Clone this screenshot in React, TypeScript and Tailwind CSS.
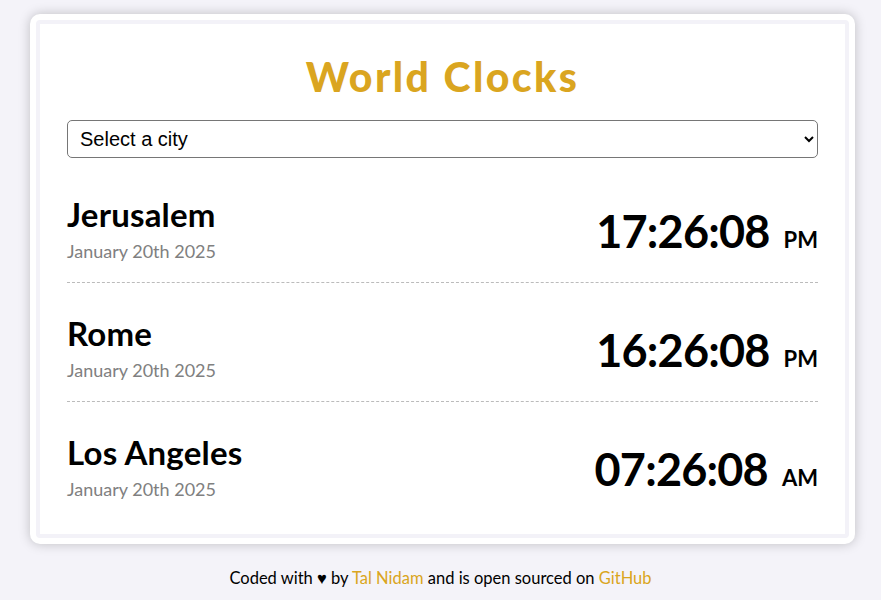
import React from "react";

const cities = [
  { name: "Jerusalem", date: "January 20th 2025", time: "17:26:08", ampm: "PM" },
  { name: "Rome", date: "January 20th 2025", time: "16:26:08", ampm: "PM" },
  { name: "Los Angeles", date: "January 20th 2025", time: "07:26:08", ampm: "AM" },
];

export default function App() {
  return (
    <div
      className="min-h-[600px] w-full bg-[#f4f3f9] pt-[14px]"
      style={{ fontFamily: "Lato, 'Open Sans', sans-serif" }}
    >
      <div className="ml-[30px] w-[825px] rounded-[10px] bg-white p-[6px] shadow-[0_0_12px_rgba(0,0,0,0.22)]">
        <div className="rounded-[4px] border-[4px] border-[#f3f2f8] bg-white px-[27px] pb-[14px]">
          <h1 className="pt-[27px] pb-[17px] text-center text-[41px] font-black leading-[52px] tracking-[2.4px] text-[#daa520]">
            World Clocks
          </h1>
          <select
            className="block h-[38px] w-full rounded-[5px] border border-[#767676] bg-white px-[8px] text-[20px] text-black"
            style={{ fontFamily: "'Liberation Sans', Arial, sans-serif" }}
            defaultValue=""
          >
            <option value="">Select a city</option>
            <option value="sydney">Sydney</option>
            <option value="tokyo">Tokyo</option>
          </select>
          <div className="pt-[6px]">
            {cities.map((c, i) => (
              <div
                key={c.name}
                className={`flex items-center justify-between pt-[31px] pb-[16px] ${
                  i < cities.length - 1 ? "border-b border-dashed border-[#bbbbbb]" : ""
                }`}
              >
                <div>
                  <div className="text-[33px] font-bold leading-[38px] tracking-[0.2px] text-black">{c.name}</div>
                  <div className="mt-[4px] text-[18px] leading-[29px] text-[#808080]">{c.date}</div>
                </div>
                <div className="flex items-baseline text-black">
                  <span className="text-[45px] font-bold leading-[56px] tracking-[-0.8px]">{c.time}</span>
                  <span className="ml-[14px] text-[22px] font-bold">{c.ampm}</span>
                </div>
              </div>
            ))}
          </div>
        </div>
      </div>
      <div className="pt-[22px] text-center text-[16.5px] text-black">
        Coded with ♥ by <a className="text-[#daa520]">Tal Nidam</a> and is open sourced on{" "}
        <a className="text-[#daa520]">GitHub</a>
      </div>
    </div>
  );
}
